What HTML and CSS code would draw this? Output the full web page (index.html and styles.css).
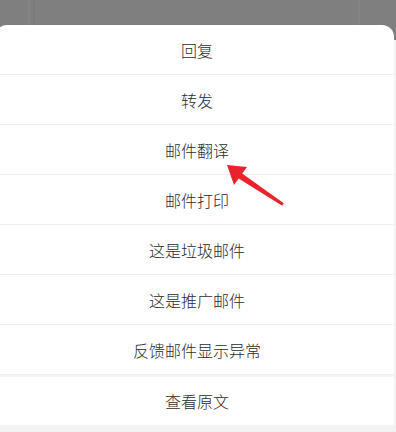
FILE: index.html
```html
<!DOCTYPE html>
<html lang="zh-CN">
<head>
<meta charset="utf-8">
<link rel="stylesheet" href="styles.css">
</head>
<body>
<div class="backdrop">
  <div class="sheet">
    <div class="item">回复</div>
    <div class="item">转发</div>
    <div class="item">邮件翻译</div>
    <div class="item">邮件打印</div>
    <div class="item">这是垃圾邮件</div>
    <div class="item">这是推广邮件</div>
    <div class="item">反馈邮件显示异常</div>
    <div class="item last">查看原文</div>
  </div>
  <svg class="arrow" width="396" height="432" viewBox="0 0 396 432">
    <polygon points="283.8,203.2 282.2,205.8 237,177.5 240,172" fill="#e8232b"/>
    <polygon points="227,165 247,167 234,185" fill="#e8232b"/>
  </svg>
</div>
</body>
</html>
```
FILE: styles.css
```css
html, body {
  margin: 0;
  padding: 0;
}
body {
  width: 396px;
  height: 432px;
  overflow: hidden;
  background: linear-gradient(to bottom, #7f7f7f 0, #7f7f7f 40px, #f2f2f2 40px);
  font-family: "Noto Sans CJK SC", "Noto Sans", sans-serif;
}
.backdrop {
  position: relative;
  width: 396px;
  height: 432px;
  padding-top: 25px;
  box-sizing: border-box;
  background:
    linear-gradient(to right, transparent 28px, #858585 28px, #858585 30px, transparent 30px, transparent 33px, #7a7a7a 33px, #7a7a7a 35px, transparent 35px, transparent 358px, #858585 358px, #858585 360px, transparent 360px) top / 100% 25px no-repeat;
}
.sheet {
  margin-left: -5px;
  width: 399px;
  background: #ffffff;
  border-radius: 12px 12px 0 0;
  display: flex;
  flex-direction: column;
}
.item {
  height: 49px;
  display: flex;
  align-items: center;
  justify-content: center;
  font-size: 16px;
  font-weight: 300;
  color: #2b2b2b;
  border-bottom: 1px solid #eeeeee;
  padding-left: 5px;
}
.item.last {
  border-bottom: none;
  border-top: 2px solid #f5f5f5;
  height: 48px;
  padding-top: 0;
}
.arrow {
  position: absolute;
  left: 0;
  top: 0;
  pointer-events: none;
}
```
